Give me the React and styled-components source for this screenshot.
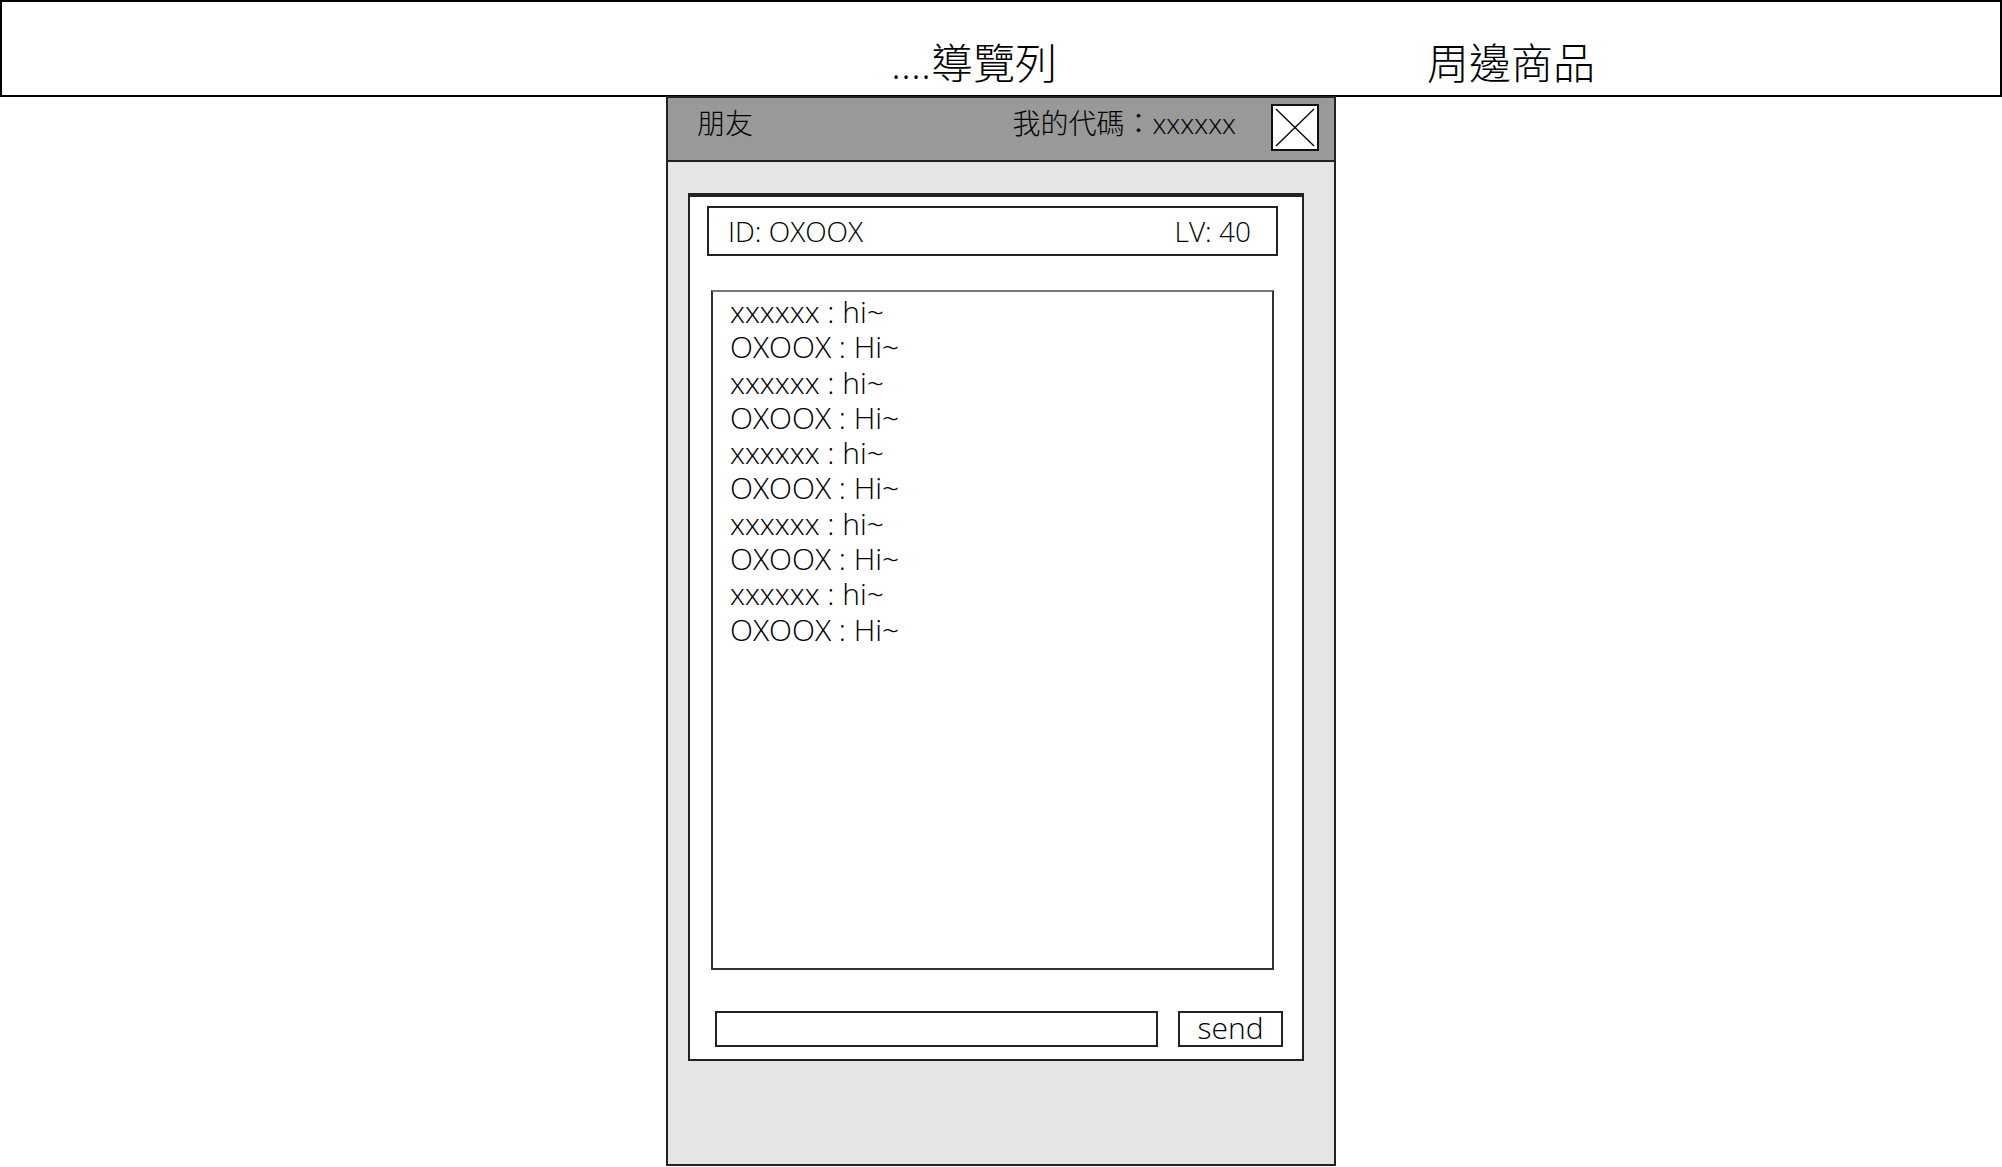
import React from "react";
import styled, { createGlobalStyle } from "styled-components";

const GlobalStyle = createGlobalStyle`
  html, body { margin: 0; padding: 0; background: #fff; }
  body {
    font-family: "Open Sans", "Noto Sans CJK TC", sans-serif;
    font-weight: 300;
    color: #000;
  }
  * { box-sizing: border-box; }
`;

const NavBar = styled.header`
  height: 97px;
  border: 2px solid #000;
  display: flex;
  align-items: flex-end;
  padding: 0 0 5px 889px;
`;

const NavItem = styled.div`
  width: ${(p) => p.$w || "auto"};
  font-family: "Open Sans", "Noto Sans CJK TC", sans-serif;
  font-size: 42px;
  font-weight: 300;
  line-height: 54px;
  white-space: nowrap;
`;

const Panel = styled.section`
  width: 670px;
  height: 1070px;
  margin: -1px auto 0;
  border: 2px solid #222;
  background: #e5e5e5;
  display: flex;
  flex-direction: column;
`;

const PanelHeader = styled.div`
  height: 64px;
  background: #999;
  border-bottom: 2px solid #222;
  display: flex;
  align-items: center;
  padding: 0 15px 0 29px;
  font-size: 28px;
  font-weight: 300;
`;

const HeaderTitle = styled.div`
  flex: 1;
  margin-bottom: 15px;
`;

const HeaderCode = styled.div`
  margin-bottom: 15px;
  margin-right: 35px;
`;

const CloseBox = styled.button`
  width: 48px;
  height: 47px;
  padding: 0;
  margin-bottom: 4px;
  background: #fff;
  border: 2px solid #111;
  display: flex;
  align-items: center;
  justify-content: center;
  cursor: pointer;
`;

const PanelBody = styled.div`
  flex: 1;
  padding: 31px 30px 0 20px;
`;

const Card = styled.div`
  height: 868px;
  background: #fff;
  border: 2px solid #222;
  border-top: 4px solid #222;
  display: flex;
  flex-direction: column;
  padding-top: 9px;
`;

const IdBar = styled.div`
  height: 50px;
  margin: 0 24px 0 17px;
  border: 2px solid #222;
  display: flex;
  align-items: center;
  justify-content: space-between;
  padding: 0 25px 0 19px;
  font-size: 28px;
`;

const MessageBox = styled.div`
  height: 680px;
  margin: 34px 28px 0 21px;
  border: 2px solid #333;
  border-top-color: #777;
  padding: 2px 17px;
`;

const MessageLine = styled.div`
  font-size: 30px;
  line-height: 35.3px;
  height: 35.3px;
  white-space: nowrap;
`;

const InputRow = styled.div`
  display: flex;
  gap: 20px;
  margin: 41px 19px 0 25px;
  height: 36px;
`;

const TextInput = styled.input`
  flex: 1;
  height: 36px;
  border: 2px solid #222;
  background: #fff;
  outline: none;
  font-family: inherit;
  font-size: 24px;
`;

const SendButton = styled.button`
  width: 105px;
  height: 36px;
  border: 2px solid #222;
  background: #fff;
  padding: 0 0 2px;
  font-family: "Open Sans", sans-serif;
  font-weight: 300;
  font-size: 30px;
  line-height: 30px;
  color: #000;
  cursor: pointer;
`;

const messages = Array.from({ length: 5 }).flatMap(() => [
  "xxxxxx : hi~",
  "OXOOX : Hi~",
]);

export default function App() {
  return (
    <>
      <GlobalStyle />
      <NavBar>
        <NavItem $w="536px">....導覽列</NavItem>
        <NavItem>周邊商品</NavItem>
      </NavBar>
      <Panel>
        <PanelHeader>
          <HeaderTitle>朋友</HeaderTitle>
          <HeaderCode>我的代碼：xxxxxx</HeaderCode>
          <CloseBox aria-label="close">
            <svg width="44" height="43" viewBox="0 0 44 43">
              <line x1="3" y1="3" x2="41" y2="40" stroke="#000" strokeWidth="1.3" />
              <line x1="41" y1="3" x2="3" y2="40" stroke="#000" strokeWidth="1.3" />
            </svg>
          </CloseBox>
        </PanelHeader>
        <PanelBody>
          <Card>
            <IdBar>
              <span>ID: OXOOX</span>
              <span>LV: 40</span>
            </IdBar>
            <MessageBox>
              {messages.map((m, i) => (
                <MessageLine key={i}>{m}</MessageLine>
              ))}
            </MessageBox>
            <InputRow>
              <TextInput type="text" />
              <SendButton>send</SendButton>
            </InputRow>
          </Card>
        </PanelBody>
      </Panel>
    </>
  );
}
